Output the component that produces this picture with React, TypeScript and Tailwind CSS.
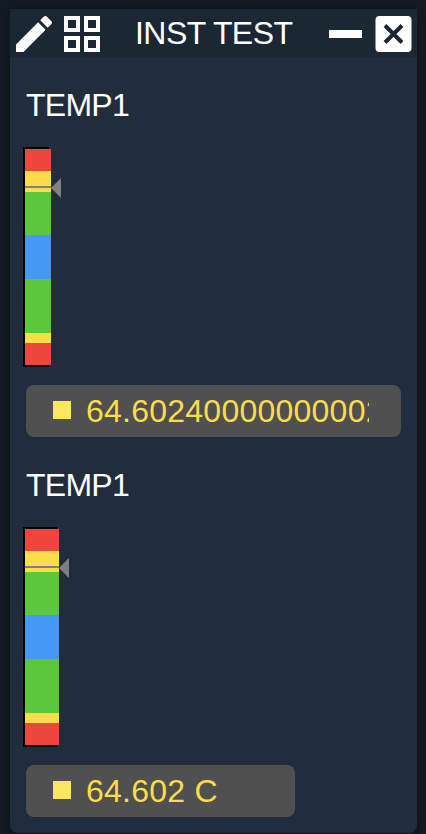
type Segment = { color: string; height: string };

const segments: Segment[] = [
  { color: 'bg-[#ed463c]', height: 'h-[22px]' },
  { color: 'bg-[#fadd4b]', height: 'h-[21px]' },
  { color: 'bg-[#5cc63c]', height: 'h-[43px]' },
  { color: 'bg-[#4598f8]', height: 'h-[44px]' },
  { color: 'bg-[#5cc63c]', height: 'h-[54px]' },
  { color: 'bg-[#fadd4b]', height: 'h-[10px]' },
  { color: 'bg-[#ed463c]', height: 'h-[22px]' },
];

function LimitsBar({ width }: { width: string }) {
  return (
    <div className={`relative -ml-px h-[216px] ${width}`}>
      <div className="absolute -left-0.5 -top-0.5 h-[220px] w-full bg-black" />
      <div className="relative flex flex-col">
        {segments.map((s, i) => (
          <div key={i} className={`${s.color} ${s.height}`} />
        ))}
      </div>
      <div className="absolute left-0 top-[37px] h-0.5 w-full bg-[#808080]" />
      <svg className="absolute left-full top-[29px] h-5 w-2.5" viewBox="0 0 10 20">
        <path d="M0 10 10 0v20z" fill="#808080" />
      </svg>
    </div>
  );
}

function Value({ text, width }: { text: string; width: string }) {
  return (
    <div className={`flex h-[52px] items-center rounded-lg bg-[#505050] pl-[27px] pr-8 ${width}`}>
      <div className="mb-0.5 h-[18px] w-[18px] shrink-0 bg-[#fae75e]" />
      <div className="ml-[15px] min-w-0 flex-1 overflow-hidden whitespace-nowrap text-[32px] leading-[52px] tracking-[0.24px] text-[#fadd4b]">
        {text}
      </div>
    </div>
  );
}

function Item({ text, barWidth, valueWidth }: { text: string; barWidth: string; valueWidth: string }) {
  return (
    <section className="h-[380px]">
      <div className="h-[68px] text-[32px] leading-[48px] tracking-[-0.75px] text-white">TEMP1</div>
      <LimitsBar width={barWidth} />
      <div className="h-5" />
      <Value text={text} width={valueWidth} />
    </section>
  );
}

export default function App() {
  return (
    <main className="h-[834px] w-[426px] overflow-hidden bg-[#131a23] px-[10px] pt-[9px] font-['Liberation_Sans',Arial,sans-serif]">
      <div className="h-[824px] w-[407px] overflow-hidden rounded-b-lg bg-[#212d3c] shadow-[0_2px_8px_rgba(0,0,0,0.35)]">
        <header className="flex h-12 items-center bg-[#1c2734] pt-0.5 text-white">
          <svg className="h-12 w-12 shrink-0" viewBox="0 0 24 24" fill="currentColor">
            <path d="M20.71 7.04c.39-.39.39-1.04 0-1.41l-2.34-2.34c-.37-.39-1.02-.39-1.41 0l-1.84 1.83 3.75 3.75M3 17.25V21h3.75L17.81 9.93l-3.75-3.75z" />
          </svg>
          <svg className="h-12 w-12 shrink-0" viewBox="0 0 24 24" fill="none" stroke="currentColor" strokeWidth="2">
            <path d="M4 4h6v6H4zM14 4h6v6h-6zM4 14h6v6H4zM14 14h6v6h-6z" />
          </svg>
          <div className="mb-0.5 ml-[29px] w-[183px] shrink-0 whitespace-nowrap text-[32px] leading-[48px] tracking-[-0.55px]">INST TEST</div>
          <div className="ml-[11px] h-2 w-[33px] shrink-0 bg-white" />
          <svg className="ml-[13px] h-9 w-[37px] shrink-0" viewBox="0 0 37 36">
            <rect x="0.5" width="36" height="36" rx="4" fill="#fff" />
            <path d="m10 9.5 17 17M27 9.5l-17 17" stroke="#1c2734" strokeWidth="4" />
          </svg>
        </header>
        <div className="px-4 pt-6">
          <Item text="64.60240000000002 C" barWidth="w-[26px]" valueWidth="w-[375px]" />
          <Item text="64.602 C" barWidth="w-[34px]" valueWidth="w-[269px]" />
        </div>
      </div>
    </main>
  );
}
